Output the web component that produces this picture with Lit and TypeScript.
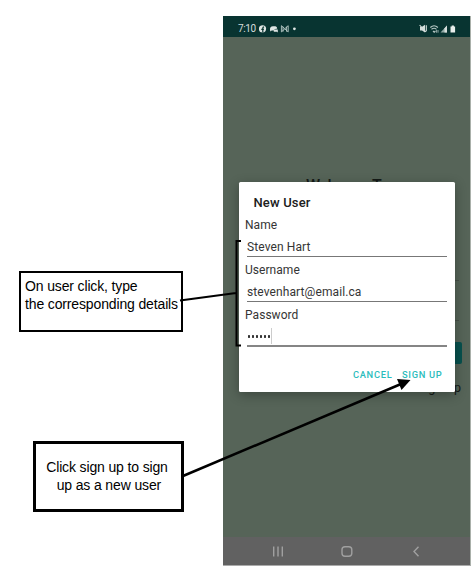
import { LitElement, html, css } from "lit";
import { customElement, property } from "lit/decorators.js";

@customElement("status-bar")
class StatusBar extends LitElement {
  static styles = css`
    :host { display: flex; justify-content: space-between; align-items: center; box-sizing: border-box; height: 21px; padding: 4px 14px 0 15px; background: #083431; color: #d5dedc; font: 10px/12px Roboto, sans-serif; }
    .group { display: flex; align-items: center; }
    .time { letter-spacing: -0.4px; margin-right: 3px; }
    svg { display: block; }
  `;
  render() {
    return html`
      <div class="group"><span class="time">7:10</span>
        <svg width="42" height="10" viewBox="0 0 42 10">
          <circle cx="3.5" cy="4.8" r="3.6" fill="#dfe6e4"/>
          <path d="M3.8 8.4V4q0-1.2 1.3-1.2M2.3 5.3h2.6" fill="none" stroke="#083431" stroke-width="1.2"/>
          <path d="M11 6.2q-.4-4 3-4h2.4q1.8 0 1.8 2.6-3-.6-3.4 1.8h-2.2l-1 1z" fill="#dfe6e4"/>
          <path d="M14.8 5.4h4v3.2l-1-.8h-3z" fill="#dfe6e4"/>
          <path d="M22.4 7.9V1.7l3.4 3 3.4-3v6.2l-3.4-3z M24 2.7v5M27.6 2.7v5" fill="none" stroke="#b8c9c6" stroke-width=".9"/>
          <circle cx="35.4" cy="4.8" r="1.4" fill="#dfe6e4"/>
        </svg>
      </div>
      <svg width="38" height="10" viewBox="0 0 38 10">
        <path d="M2 2.8h2L7 .8v7.6L4 6.4H2z" fill="#d5dedc"/>
        <path d="M1.6 1l6.4 7M8.3 1.2v6" fill="none" stroke="#d5dedc" stroke-width="1.1"/>
        <path d="M12.3 3.5q3.8-3.4 7.6 0M13.5 5.3q2.6-2 5 0M15 7l1.2 1.2 1.2-1.2" fill="none" stroke="#b8c9c6" stroke-width="1.1"/>
        <path d="M18.4 6v2.7M20 6v2.7" stroke="#b8c9c6" stroke-width=".8"/>
        <path d="M22.5 8.4L29 1.5v6.9z" fill="#8fa8a4"/><path d="M26.5 4.2L29 1.5v6.9h-2.5z" fill="#d5dedc"/>
        <path d="M32.5 2.4h1.2v-1h2.2v1h1.2v6h-4.6z" fill="#e8eeec"/>
      </svg>`;
  }
}

@customElement("form-field")
class FormField extends LitElement {
  @property() label = "";
  @property() value = "";
  @property({ type: Boolean, reflect: true }) secret = false;
  static styles = css`
    :host { display: block; height: 45px; font: 12px/20px Roboto, sans-serif; color: #353535; }
    .label { height: 20px; padding-left: 6px; letter-spacing: 0.05px; }
    .value { display: flex; align-items: center; box-sizing: border-box; height: 22px; margin: 0 8px; padding-top: 3px; border-bottom: 1px solid #777; letter-spacing: 0.1px; }
    :host([secret]) .value { border-bottom: 2px solid #858585; }
    .dots { display: flex; gap: 2px; padding: 0 0 0 1px; }
    .dot { width: 2px; height: 2.5px; border-radius: 30%; background: #333; }
    .caret { width: 1px; height: 16px; margin: -1px 0 0 1px; background: #ccc; }
  `;
  render() {
    return html`<div class="label">${this.label}</div>
      <div class="value">${this.secret
        ? html`<div class="dots">${Array.from({ length: 6 }, () => html`<span class="dot"></span>`)}</div><span class="caret"></span>`
        : this.value}</div>`;
  }
}

@customElement("app-root")
class AppRoot extends LitElement {
  static styles = css`
    :host { display: block; position: relative; width: 476px; height: 571px; overflow: hidden; background: #fff; }
    .phone { position: absolute; left: 223px; top: 16px; width: 247px; height: 549px; display: flex; flex-direction: column; border-right: 1px solid #aab0aa; border-bottom: 1px solid #aaa; }
    .screen { flex: 1; background: #566458; display: flex; flex-direction: column; font-family: Roboto, sans-serif; color: #141a17; }
    .welcome { margin-top: 139px; padding-left: 83px; font: 500 16px/20px Roboto, sans-serif; letter-spacing: -.5px; }
    .line { margin: 0 11px 0 16px; height: 40px; box-sizing: border-box; border-bottom: 1px solid #465048; }
    .line.first { margin-top: 45px; }
    .login { height: 22px; margin: 21px 8.5px 0 16px; border-radius: 2px; background: #07504d; }
    .link { margin: 14px 9px 0 0; text-align: right; font: 400 12.5px/20px Roboto, sans-serif; letter-spacing: .1px; }
    .nav { height: 28px; background: #616161; }
    .nav svg { display: block; }
    .dialog { position: absolute; left: 239px; top: 181.5px; width: 215.5px; height: 210px; box-sizing: border-box; padding-top: 10.5px; border-radius: 1.5px; background: #fff; box-shadow: 0 3px 12px rgba(0,0,0,.3); font-family: Roboto, sans-serif; }
    .title { padding: 0.5px 0 0 14.5px; box-sizing: border-box; height: 20px; margin-bottom: 3px; font-size: 13px; line-height: 20px; font-weight: 500; color: #202020; letter-spacing: .15px; }
    .actions { display: flex; justify-content: flex-end; gap: 9.5px; padding: 15px 12px 0 0; font-size: 9.3px; line-height: 20px; font-weight: 500; letter-spacing: .72px; color: #2bbcbc; }
    .note { position: absolute; box-sizing: border-box; background: #fff; color: #000; font: 14px/18px "Liberation Sans", Arial, sans-serif; letter-spacing: -.14px; white-space: pre; }
    .details { left: 19px; top: 271px; width: 164px; height: 61px; border: 2px solid #000; padding: 4px 0 0 4px; }
    .signup { left: 33px; top: 441px; width: 151px; height: 71px; border: 3px solid #000; padding: 14px 3px 0 0; text-align: center; }
    .lines { position: absolute; inset: 0; pointer-events: none; }
  `;
  render() {
    return html`
      <div class="phone">
        <status-bar></status-bar>
        <div class="screen">
          <div class="welcome">Welcome To</div>
          <div class="line first"></div><div class="line"></div>
          <div class="login"></div>
          <div class="link">Sign Up</div>
        </div>
        <div class="nav">
          <svg width="247" height="28" viewBox="0 0 247 28" fill="none" stroke="#a0a0a0" stroke-width="1.4">
            <path d="M50.7 9.5v10M55 9.5v10M59.3 9.5v10"/>
            <rect x="119" y="9.7" width="9.8" height="9.6" rx="3"/>
            <path d="M195.5 9.8l-4.5 4.7 4.5 4.7"/>
          </svg>
        </div>
      </div>
      <div class="dialog">
        <div class="title">New User</div>
        <form-field label="Name" value="Steven Hart"></form-field>
        <form-field label="Username" value="stevenhart@email.ca"></form-field>
        <form-field label="Password" secret></form-field>
        <div class="actions"><span>CANCEL</span><span>SIGN UP</span></div>
      </div>
      <div class="note details">On user click, type
the corresponding details</div>
      <div class="note signup">Click sign up to sign
 up as a new user</div>
      <svg class="lines" width="476" height="571" viewBox="0 0 476 571">
        <path d="M241 241h-4.5v104.5h4.5M180 300.5l56-7.5" fill="none" stroke="#000" stroke-width="2"/>
        <path d="M183 476l218-92" fill="none" stroke="#000" stroke-width="2.5"/>
        <path d="M410.5 380l-13.5-1 4.5 11z" fill="#000"/>
      </svg>`;
  }
}
